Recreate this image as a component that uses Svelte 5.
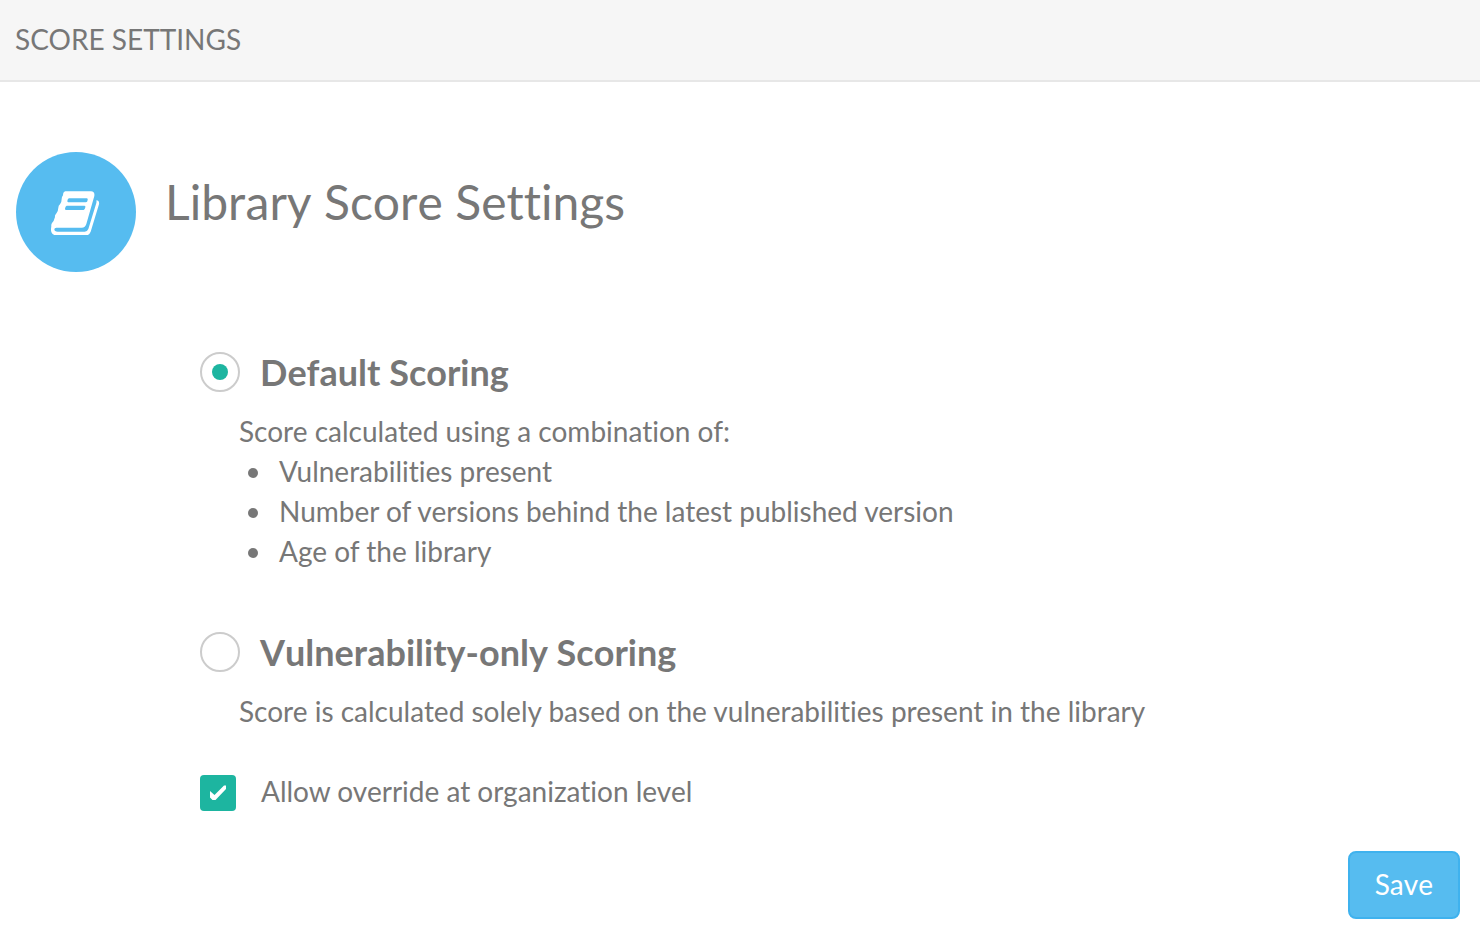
<script>
  let scoring = $state('default');
  let allowOverride = $state(true);
  const factors = [
    'Vulnerabilities present',
    'Number of versions behind the latest published version',
    'Age of the library'
  ];
</script>

<header class="bar"><h1>SCORE SETTINGS</h1></header>

<main>
  <div class="title">
    <span class="badge">
      <svg viewBox="33 27 150 138" aria-hidden="true">
        <path fill="#fff" fill-rule="evenodd" d="M76 34H153Q165 35 163 48L139 132Q136 143 125 143H49Q43 143 43 148Q43 155 53 155H134Q142 155 145 147L169 69Q170 64 169 61Q179 62 177 73L152 155Q147 167 135 167H50Q32 164 33 147L34 138Q33 134 36 129Q42 123 45 111Q44 105 48 102Q55 93 55 83Q55 77 60 73Q65 67 65 57Q65 51 69 46Q69 36 76 34ZM87 55Q83 56 82 63Q82 67 85 67H138Q142 67 143 60Q144 55 140 55ZM80 77Q76 79 75 86Q75 90 78 90H131Q135 89 136 82Q137 77 133 77Z" />
      </svg>
    </span>
    <h2>Library Score Settings</h2>
  </div>

  <form onsubmit={(e) => e.preventDefault()}>
    <section class="option">
      <label>
        <input type="radio" name="scoring" value="default" bind:group={scoring} />
        <span>Default Scoring</span>
      </label>
      <div class="details">
        <p>Score calculated using a combination of:</p>
        <ul>
          {#each factors as factor}
            <li>{factor}</li>
          {/each}
        </ul>
      </div>
    </section>

    <section class="option">
      <label>
        <input type="radio" name="scoring" value="vulnerability" bind:group={scoring} />
        <span>Vulnerability-only Scoring</span>
      </label>
      <div class="details">
        <p>Score is calculated solely based on the vulnerabilities present in the library</p>
      </div>
    </section>

    <label class="override">
      <span class="tick">
        <input type="checkbox" bind:checked={allowOverride} />
        {#if allowOverride}
          <svg viewBox="0 0 36 36" aria-hidden="true">
            <path d="M10 16L14.500 20L24 10.500H26V14L15.500 25H12.500L10 22.500Z" fill="#fff" />
          </svg>
        {/if}
      </span>
      <span>Allow override at organization level</span>
    </label>

    <div class="actions"><button type="submit">Save</button></div>
  </form>
</main>

<style>
  :global(body) {
    margin: 0;
    background: #fff;
    color: #777;
    font: 28px/40px Lato, sans-serif;
    font-variant-ligatures: none;
  }
  h1, h2, p, ul { margin: 0; padding: 0; font-weight: 400; }
  h2, .option label, button { font-kerning: none; }
  .bar {
    padding: 19px 15px 21px;
    background: #f6f6f6;
    border-bottom: 2px solid #e7e7e7;
  }
  h1 { font-size: 28px; line-height: 40px; }
  main { padding: 70px 20px 30px 16px; }
  .title { display: flex; gap: 29px; }
  .badge {
    display: grid;
    place-items: center;
    flex: none;
    width: 120px;
    height: 120px;
    border-radius: 50%;
    background: #56bcf0;
  }
  .badge svg { width: 50px; height: 46px; }
  h2 { padding-top: 20px; font-size: 48px; line-height: 60px; }
  form { padding: 80px 0 0 184px; }
  .option { margin-bottom: 61px; }
  .option + .option { margin-bottom: 40px; }
  .option label {
    display: flex;
    align-items: center;
    gap: 20px;
    font-size: 36px;
    font-weight: 700;
  }
  .details { padding: 19px 0 0 39px; }
  ul { list-style: none; }
  li { display: flex; align-items: center; gap: 21px; padding-left: 9px; }
  li::before {
    content: '';
    width: 10px;
    height: 10px;
    margin-top: 4px;
    border-radius: 50%;
    background: #777;
  }
  input { appearance: none; flex: none; box-sizing: border-box; margin: 0; }
  input[type='radio'] {
    display: grid;
    place-items: center;
    width: 40px;
    height: 40px;
    border: 2px solid #ccc;
    border-radius: 50%;
    background: #fff;
  }
  input[type='radio']:checked::before {
    content: '';
    width: 16px;
    height: 16px;
    border-radius: 50%;
    background: #1db5a0;
  }
  .override { display: flex; align-items: center; gap: 25px; }
  .tick { display: grid; width: 36px; height: 36px; margin-top: 4px; }
  .tick > * { grid-area: 1 / 1; width: 36px; height: 36px; }
  .tick svg { pointer-events: none; }
  input[type='checkbox'] { border: 2px solid #ccc; border-radius: 4px; }
  input[type='checkbox']:checked { border: 0; background: #1db5a0; }
  .actions { display: flex; justify-content: flex-end; padding-top: 40px; }
  button {
    padding: 11px 25px 13px;
    border: 2px solid #3fb2ee;
    border-radius: 8px;
    background: #56bcf0;
    color: #fff;
    font-family: inherit;
    font-size: 28px;
    line-height: 40px;
  }
</style>
